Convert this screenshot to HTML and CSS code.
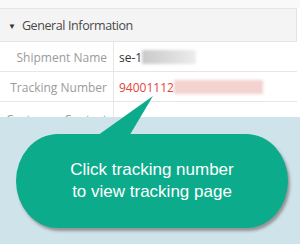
FILE: index.html
```html
<!DOCTYPE html>
<html>
<head>
<meta charset="utf-8">
<link rel="stylesheet" href="styles.css">
</head>
<body>
<div class="page">
  <div class="panel">
    <div class="panel-head"><span class="caret">▼</span>General Information</div>
    <div class="rows">
      <div class="label">Shipment Name</div>
      <div class="value"><span class="plain">se-1</span><span class="blur blur-grey"></span></div>
      <div class="label">Tracking Number</div>
      <div class="value"><span class="track">94001112</span><span class="blur blur-pink"></span></div>
      <div class="label label-last">Customer Contact</div>
      <div class="value"></div>
    </div>
  </div>
  <div class="backdrop">
    <div class="bubble">Click tracking number<br>to view tracking page</div>
  </div>
  <svg class="pointer" width="70" height="46" viewBox="0 0 70 46" aria-hidden="true">
    <path d="M65 1 L6 43 L40 43 Z" fill="#0cab8b"/>
  </svg>
</div>
</body>
</html>
```
FILE: styles.css
```css
html, body {
  margin: 0;
  padding: 0;
}
body {
  width: 300px;
  height: 244px;
  overflow: hidden;
  background: #cfe4ea;
  font-family: "Open Sans", "Liberation Sans", sans-serif;
}
.page {
  position: relative;
  width: 300px;
  height: 244px;
}
.panel {
  height: 117px;
  overflow: hidden;
  padding-top: 8px;
  box-sizing: border-box;
  background: linear-gradient(#f9f9f9 0 8px, #fff 8px);
}
.panel-head {
  width: 297px;
  box-sizing: border-box;
  height: 34px;
  border-top: 1px solid #e4e4e4;
  border-bottom: 1px solid #e4e4e4;
  border-right: 1px solid #e4e4e4;
  background: #f4f4f4;
  display: flex;
  align-items: center;
  padding-left: 8px;
  font-size: 12.5px;
  letter-spacing: -0.4px;
  color: #4a4a4a;
  white-space: nowrap;
}
.caret {
  font-size: 8px;
  margin-right: 6px;
  color: #333;
  letter-spacing: 0;
}
.rows {
  width: 297px;
  display: grid;
  grid-template-columns: 114px 1fr;
  grid-auto-rows: 30px;
}
.label {
  box-sizing: border-box;
  border-right: 1px solid #e6e6e6;
  border-bottom: 1px solid #e6e6e6;
  padding-right: 6px;
  font-size: 12px;
  color: #9b9b9b;
  display: flex;
  align-items: center;
  justify-content: flex-end;
  white-space: nowrap;
  padding-top: 1px;
}
.label-last {
  padding-top: 5px;
}
.value {
  box-sizing: border-box;
  border-bottom: 1px solid #e6e6e6;
  padding-left: 5px;
  padding-top: 1px;
  display: flex;
  align-items: center;
  font-size: 12px;
  white-space: nowrap;
}
.plain {
  color: #333;
}
.track {
  color: #e5433c;
}
.blur {
  display: inline-block;
  height: 14px;
  filter: blur(1.5px);
}
.blur-grey {
  width: 54px;
  background: linear-gradient(90deg, #c9c9c9, #dedede 60%, #ededed);
}
.blur-pink {
  width: 89px;
  background: #f3d2d0;
}
.backdrop {
  height: 127px;
  padding: 17px 0 0 16px;
  box-sizing: border-box;
  background: #cfe4ea;
}
.bubble {
  width: 272px;
  height: 94px;
  box-sizing: border-box;
  border-radius: 42px / 47px;
  background: #0cab8b;
  box-shadow: 2px 3px 3px rgba(70, 50, 50, 0.45);
  color: #fff;
  font-family: "Liberation Sans", Arial, sans-serif;
  font-size: 17px;
  line-height: 22px;
  text-align: center;
  display: flex;
  align-items: center;
  justify-content: center;
}
.pointer {
  position: absolute;
  left: 88px;
  top: 95px;
}
```
